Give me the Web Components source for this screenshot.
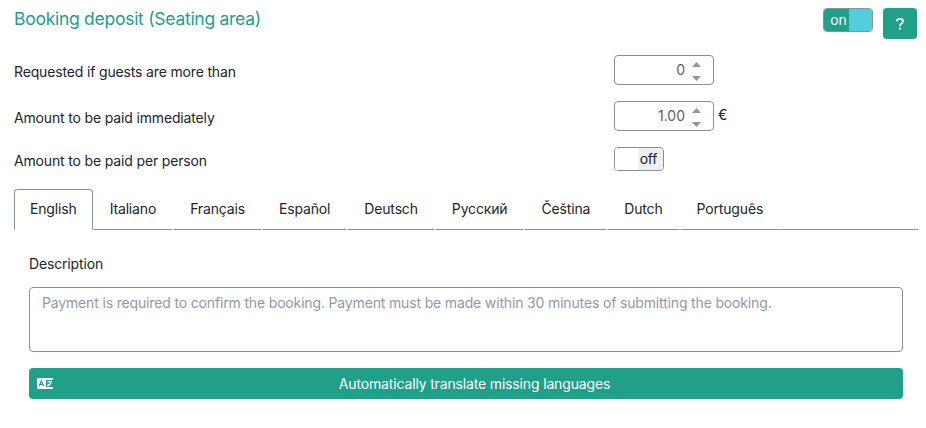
<!DOCTYPE html>
<html lang="en">
<head>
<meta charset="utf-8">
<title>Booking deposit</title>
<style>
body{margin:0;background:#fff;color:#212529;font:400 14px/21px Inter,"Noto Sans",sans-serif;letter-spacing:-.157px}
</style>
</head>
<body>
<deposit-settings></deposit-settings>
<script>
const define = (name, html) => {
  const t = document.createElement('template');
  t.innerHTML = html;
  customElements.define(name, class extends HTMLElement {
    constructor() {
      super();
      this.attachShadow({mode: 'open'}).append(t.content.cloneNode(true));
    }
  });
};

define('toggle-switch', `
<style>
:host{display:flex;box-sizing:border-box;width:50px;height:24px;border:1px solid #8b9093;border-radius:4px;overflow:hidden;background:#fff;line-height:22px}
.label{box-sizing:border-box;width:25px;text-align:center;background:#eceff4;color:#212529;padding-right:4px}
.knob{flex:1;background:#fff}
:host([checked]) .label{background:#20a088;color:#fff;padding:0 0 0 4px}
:host(:not([checked])) .knob{order:-1}
:host([checked]) .knob{background:#51cddb}
</style>
<span class="label"><slot></slot></span><span class="knob"></span>`);

define('help-button', `
<style>
:host{display:flex;align-items:center;justify-content:center;width:34px;height:31px;border-radius:4px;background:#20a088}
svg{display:block}
</style>
<svg width="10" height="14" viewBox="0 0 10 14" fill="none" stroke="#fff" stroke-width="1.8"><path d="M1.6 4.4C1.9 2.7 3 1.8 4.9 1.8C6.8 1.8 8 2.8 8 4.3C8 6.5 4.9 6.5 4.9 9.2"/><circle cx="4.9" cy="11.7" r="1.15" fill="#fff" stroke="none"/></svg>`);

define('number-field', `
<style>
:host{display:flex;align-items:center;justify-content:flex-end;box-sizing:border-box;width:100px;height:30px;padding-right:12px;gap:7px;border:1px solid #8b9093;border-radius:4px;color:#5b6168;letter-spacing:0}
span{padding-bottom:1px}
svg{display:block;margin-top:3px}
</style>
<span><slot></slot></span>
<svg width="9" height="19" viewBox="0 0 9 19" fill="#8f95a1"><path d="M0 5L4.5 0L9 5ZM0 14L4.5 19L9 14Z"/></svg>`);

define('setting-row', `
<style>
:host{display:grid;grid-template-columns:600px auto 1fr;align-items:center}
.unit{padding:0 0 3px 4px}
.label{padding-top:3px}
</style>
<span class="label"><slot></slot></span><slot name="control"></slot><span class="unit"><slot name="unit"></slot></span>`);

define('language-tab', `
<style>
:host{display:block;box-sizing:border-box;height:41px;padding:8px 16px 0;border:1px solid transparent;border-bottom-color:#8b9093;border-radius:4px 4px 0 0}
:host([active]){border-color:#8b9093;border-bottom-color:#fff;padding:8px 15px 0}
</style>
<slot></slot>`);

define('language-tabs', `
<style>
:host{display:flex;height:41px}
.rest{flex:1;border-bottom:1px solid #8b9093}
</style>
<slot></slot><span class="rest"></span>`);

define('description-field', `
<style>
:host{display:flex;flex-direction:column;gap:13px}
.box{box-sizing:border-box;height:65px;padding:4px 12px;border:1px solid #8b9093;border-radius:4px;color:#9299a6}
</style>
<span>Description</span>
<div class="box"><slot></slot></div>`);

define('translate-button', `
<style>
:host{display:grid;grid-template-columns:17px 1fr;align-items:center;box-sizing:border-box;height:31px;padding:0 8px;border-radius:4px;background:#20a088;color:#fff;text-align:center}
svg{display:block}
</style>
<svg width="16" height="11" viewBox="0 0 16 11"><path d="M1.3 0H16V2H9V9H16V11H1.3Q0 11 0 9.7V1.3Q0 0 1.3 0Z" fill="#fff"/><path d="M2.2 8L4.4 3L6.6 8M3.1 6.5H5.7" fill="none" stroke="#20a088" stroke-width="1.2"/><path d="M10.2 3.8H15M12.5 2.8V3.8M10.6 6.2H12M14 3.8C13.7 5.9 12.4 7.4 10.2 8.1" fill="none" stroke="#fff" stroke-width="1.1"/></svg>
<span><slot></slot></span>`);

define('deposit-settings', `
<style>
:host{display:flow-root;padding:8px 9px 0 14px}
header{display:flex;align-items:flex-start;height:31px}
h1{flex:1;margin:0;font-size:17.5px;line-height:21px;font-weight:inherit;color:#20a088;letter-spacing:-.27px}
help-button{margin-left:10px}
.rows{display:flex;flex-direction:column;gap:16px;margin:16px 0 18px}
language-tabs{margin-right:-1px}
.panel{padding:23px 14px 0 15px}
translate-button{margin-top:16px}
</style>
<header><h1>Booking deposit (Seating area)</h1><toggle-switch checked>on</toggle-switch><help-button></help-button></header>
<div class="rows">
<setting-row>Requested if guests are more than<number-field slot="control">0</number-field></setting-row>
<setting-row>Amount to be paid immediately<number-field slot="control">1.00</number-field><span slot="unit">€</span></setting-row>
<setting-row>Amount to be paid per person<toggle-switch slot="control">off</toggle-switch></setting-row>
</div>
<language-tabs><language-tab active>English</language-tab><language-tab>Italiano</language-tab><language-tab>Français</language-tab><language-tab>Español</language-tab><language-tab>Deutsch</language-tab><language-tab>Русский</language-tab><language-tab>Čeština</language-tab><language-tab>Dutch</language-tab><language-tab>Português</language-tab></language-tabs>
<div class="panel">
<description-field>Payment is required to confirm the booking. Payment must be made within 30 minutes of submitting the booking.</description-field>
<translate-button>Automatically translate missing languages</translate-button>
</div>`);
</script>
</body>
</html>
